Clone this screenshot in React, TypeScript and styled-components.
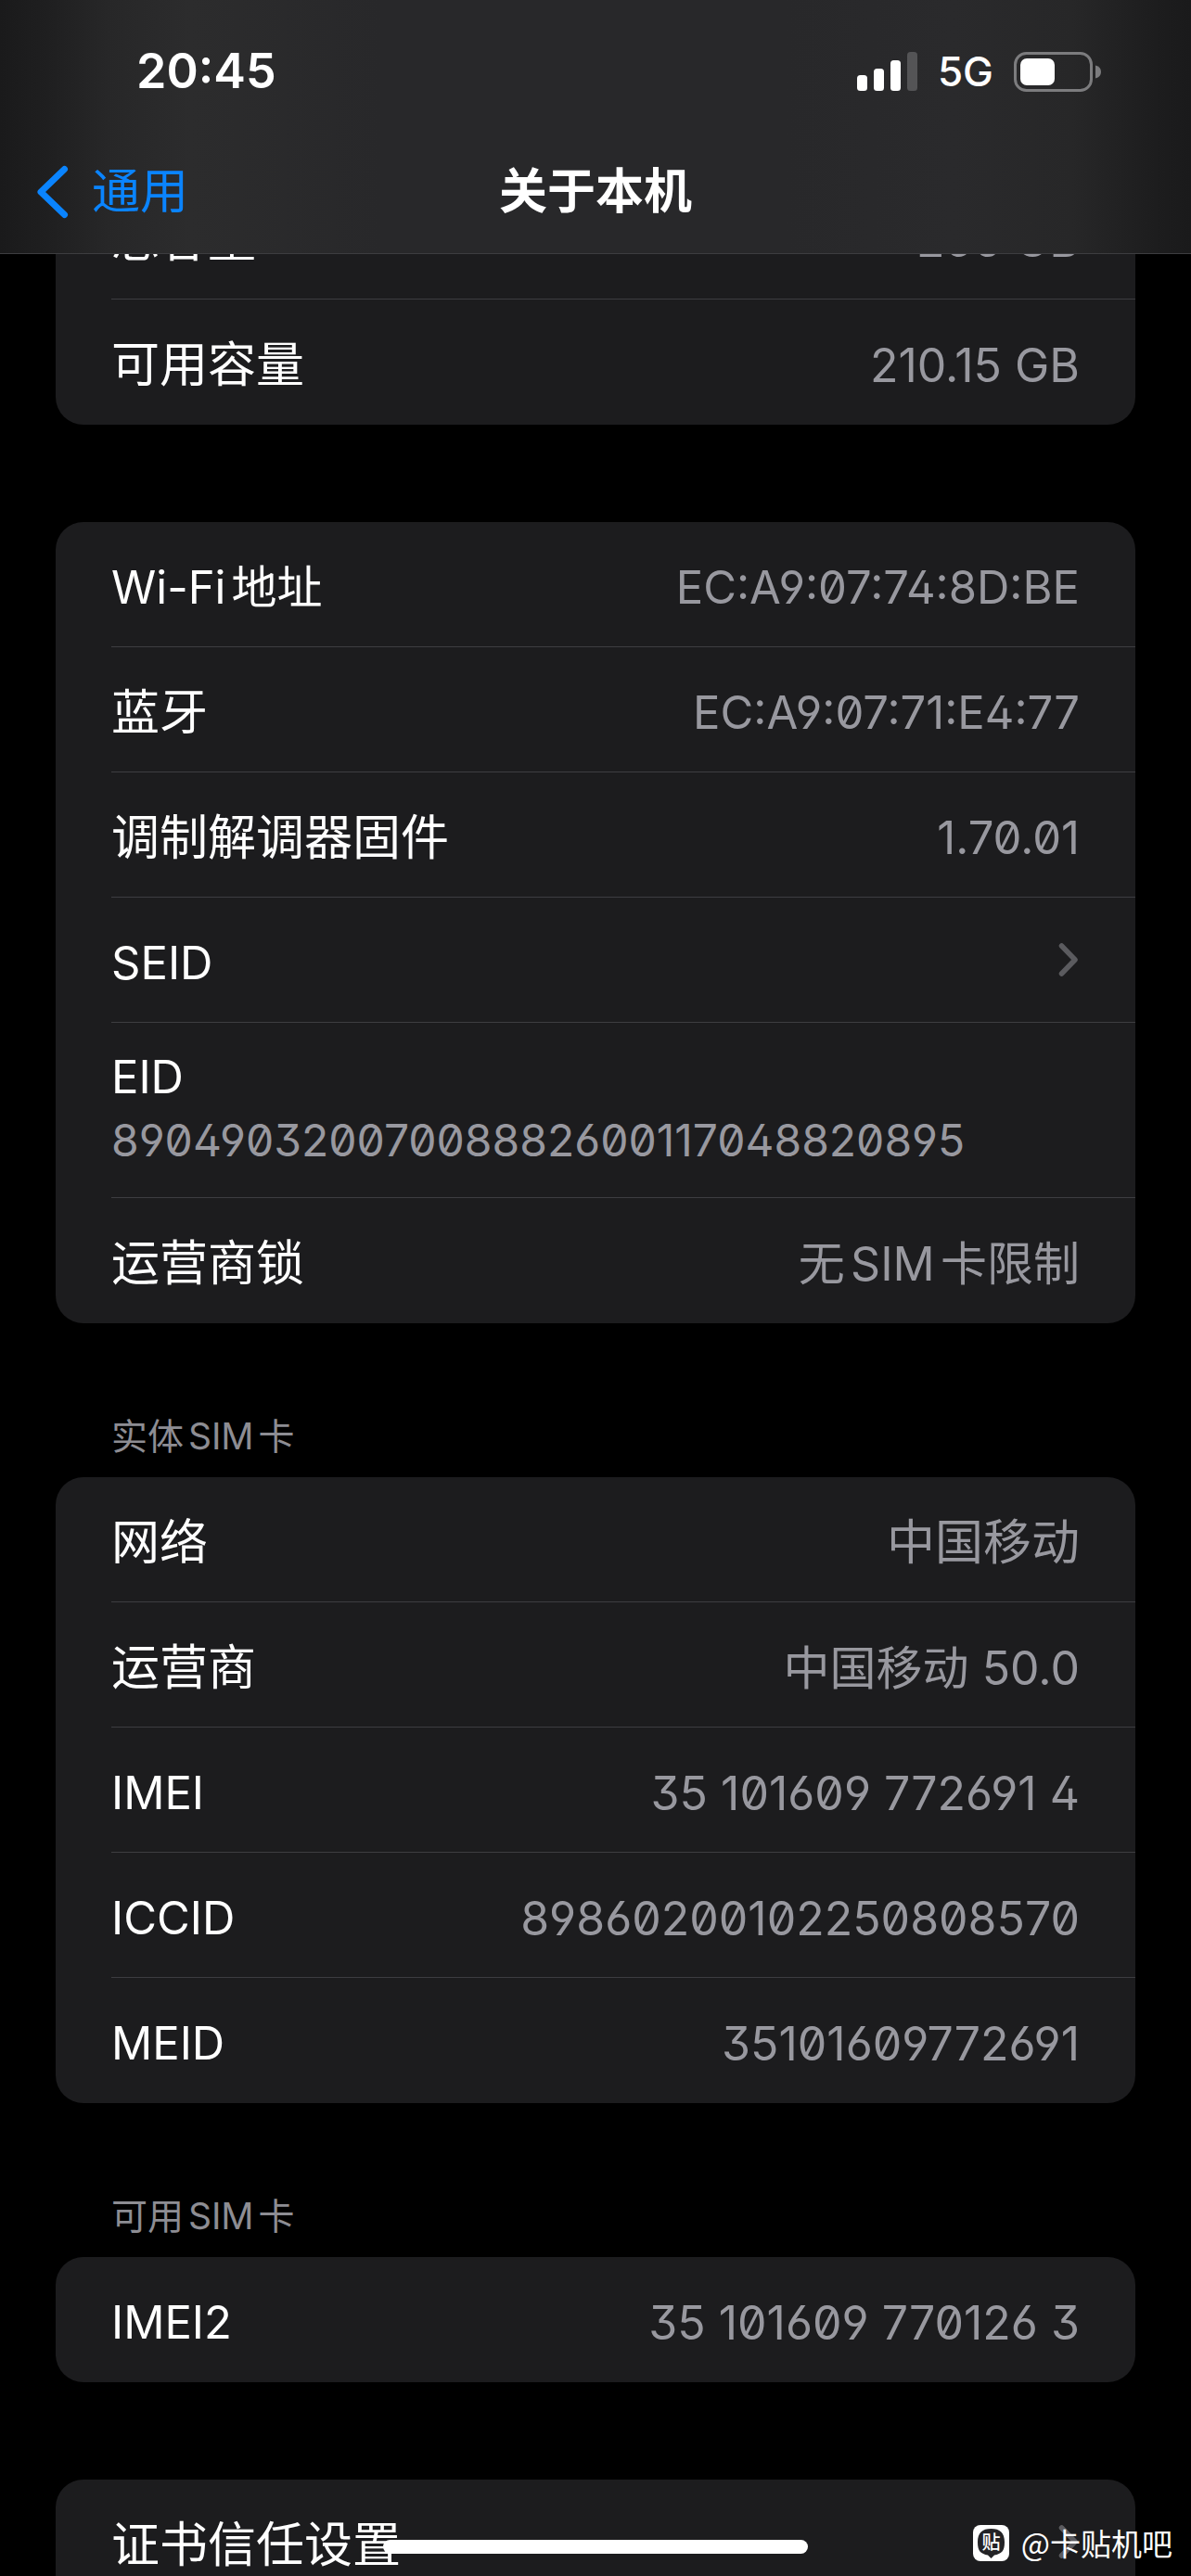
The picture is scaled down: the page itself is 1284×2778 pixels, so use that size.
import React from 'react';
import styled, { createGlobalStyle, css } from 'styled-components';

const fontStack = `Inter, "Noto Sans CJK SC", sans-serif`;

const GlobalStyle = createGlobalStyle`
  *, *::before, *::after { box-sizing: border-box; }
  html, body { margin: 0; background: #000; }
  body {
    font-family: ${fontStack};
    color: #fff;
    text-autospace: normal;
  }
`;

const Screen = styled.div`
  position: relative;
  height: 100vh;
  overflow: hidden;
  background: #000;
`;

const Header = styled.header`
  position: absolute;
  inset: 0 0 auto;
  z-index: 1;
  border-bottom: 1px solid #3d3d40;
  background: linear-gradient(
    90deg,
    #1a1a1b 0%,
    #1f1f20 4%,
    #272728 9%,
    #2c2c2d 16%,
    #28282a 32%,
    #28282a 66%,
    #2a2a2c 80%,
    #272728 90%,
    #1d1d1e 97%,
    #1a1a1b 100%
  );
`;

const StatusBar = styled.div`
  display: flex;
  align-items: center;
  justify-content: space-between;
  height: 141px;
  padding: 13px 96px 0 147px;
`;

const Time = styled.time`
  font-size: 52px;
  font-weight: 600;
  line-height: 60px;
`;

const StatusIcons = styled.div`
  display: flex;
  align-items: center;
  gap: 22px;
`;

const Network = styled.span`
  font-size: 44px;
  font-weight: 500;
  line-height: 48px;
`;

const NavBar = styled.nav`
  display: grid;
  grid-template-columns: 1fr auto 1fr;
  align-items: center;
  height: 132px;
  padding: 0 38px;
`;

const BackButton = styled.button`
  display: flex;
  align-items: center;
  justify-self: start;
  gap: 24px;
  padding: 0;
  border: 0;
  background: none;
  color: #0a84ff;
  font: 400 52px/60px ${fontStack};
`;

const Title = styled.h1`
  margin: 0;
  font-size: 52px;
  font-weight: 600;
  line-height: 60px;
`;

const Content = styled.main`
  height: 100%;
  overflow-y: auto;
  scrollbar-width: none;
  padding: 188px 60px 60px;
`;

const Section = styled.section`
  & + & { margin-top: 105px; }
`;

const SectionTitle = styled.h2`
  margin: 0;
  padding: 0 60px 21px;
  font-size: 39px;
  font-weight: 400;
  line-height: 40px;
  color: #8d8d93;

  /* the heading sits a little closer to the previous card */
  margin-top: -3px;
  padding-bottom: 24px;
`;

const Card = styled.ul`
  margin: 0;
  padding: 0 0 0 60px;
  list-style: none;
  border-radius: 30px;
  background: #1c1c1e;
`;

const Item = styled.li`
  &:not(:last-child) { border-bottom: 1px solid #3d3d41; }
  &:last-child { padding-bottom: 1px; }
`;

const rowBox = css`
  display: flex;
  align-items: center;
  justify-content: space-between;
  width: 100%;
  height: 134px;
  padding: 0 60px 0 0;
`;

const Row = styled.div`
  ${rowBox}
`;

const StackedRow = styled.div`
  display: flex;
  flex-direction: column;
  justify-content: center;
  height: 188px;
  padding: 0 60px 10px 0;
`;

const RowButton = styled.button`
  ${rowBox}
  border: 0;
  background: none;
  color: inherit;
  font-family: inherit;
  text-align: left;
`;

type Script = 'han' | 'latin' | 'number' | 'long';

const textSize: Record<Script, string> = {
  han: '52px',
  number: '50px',
  latin: '49px',
  long: '48px',
};

const Label = styled.span<{ $script: Script }>`
  padding-top: 8px;
  font-size: ${({ $script }) => textSize[$script]};
  line-height: 60px;
`;

const Value = styled(Label)<{ $code?: boolean }>`
  color: #98989f;
  font-feature-settings: ${({ $code }) => ($code ? `'zero' 1, 'ss01' 1` : 'normal')};
`;

const HomeIndicator = styled.div`
  position: absolute;
  left: 50%;
  bottom: 24px;
  width: 458px;
  height: 15px;
  margin-left: -229px;
  border-radius: 8px;
  background: #fff;
`;

const Watermark = styled.div`
  position: absolute;
  right: 20px;
  bottom: 12px;
  display: flex;
  align-items: center;
  gap: 13px;
  font: 400 33px/48px "Noto Sans CJK SC", sans-serif;
`;

const SignalIcon = () => (
  <svg width="65" height="42" viewBox="0 0 65 42" fill="#fff" aria-hidden="true">
    <rect x="0" y="25" width="11" height="17" rx="3.5" />
    <rect x="18" y="18" width="11" height="24" rx="3.5" />
    <rect x="36" y="9" width="11" height="33" rx="3.5" />
    <rect x="54" y="0" width="11" height="42" rx="3.5" fill="#545456" />
  </svg>
);

const BatteryIcon = () => (
  <svg width="95" height="43" viewBox="0 0 95 43" aria-hidden="true">
    <rect x="1.5" y="1.5" width="82" height="40" rx="12" fill="none" stroke="#7c7c7e" strokeWidth="3" />
    <rect x="7" y="7" width="37" height="29" rx="7" fill="#fff" />
    <path d="M88 14.5c4 1 6 3.500 6 7s-2 6-6 7z" fill="#7c7c7e" />
  </svg>
);

const BackIcon = () => (
  <svg width="37" height="60" viewBox="0 0 37 60" fill="none" aria-hidden="true">
    <path d="M31.500 5.500 6 30l25.500 24.500" stroke="#0a84ff" strokeWidth="7" strokeLinecap="round" strokeLinejoin="round" />
  </svg>
);

const ForwardIcon = () => (
  <svg width="23" height="38" viewBox="0 0 23 38" fill="none" aria-hidden="true">
    <path d="M3.500 4 18 19 3.500 34" stroke="#5b5b5f" strokeWidth="5.500" strokeLinecap="round" strokeLinejoin="round" />
  </svg>
);

const TiebaIcon = () => (
  <svg width="39" height="39" viewBox="0 0 39 39" aria-hidden="true">
    <rect width="39" height="39" rx="8" fill="#fff" />
    <path
      d="M19.500 4C29 4 34 8.500 34 18.500S30.500 31 23 32.500L19.500 36l-3.500-3.500C8.500 31 5 28.500 5 18.500S10 4 19.500 4z"
      fill="#232326"
    />
    <text
      x="19.500"
      y="26"
      textAnchor="middle"
      fontFamily="'Noto Sans CJK SC', sans-serif"
      fontSize="20"
      fontWeight="500"
      fill="#fff"
    >
      贴
    </text>
  </svg>
);

type Entry = {
  label: string;
  labelScript?: Script;
  value?: string;
  valueScript?: Script;
  code?: boolean;
  stacked?: boolean;
  link?: boolean;
};

type Group = { title?: string; entries: Entry[] };

const groups: Group[] = [
  {
    entries: [
      { label: '总容量', value: '256 GB' },
      { label: '可用容量', value: '210.15 GB' },
    ],
  },
  {
    entries: [
      { label: 'Wi-Fi地址', labelScript: 'latin', value: 'EC:A9:07:74:8D:BE', valueScript: 'latin', code: true },
      { label: '蓝牙', value: 'EC:A9:07:71:E4:77', valueScript: 'latin', code: true },
      { label: '调制解调器固件', value: '1.70.01', valueScript: 'latin', code: true },
      { label: 'SEID', labelScript: 'latin', link: true },
      {
        label: 'EID',
        labelScript: 'latin',
        value: '89049032007008882600117048820895',
        valueScript: 'long',
        code: true,
        stacked: true,
      },
      { label: '运营商锁', value: '无SIM卡限制' },
    ],
  },
  {
    title: '实体SIM卡',
    entries: [
      { label: '网络', value: '中国移动', valueScript: 'han' },
      { label: '运营商', value: '中国移动 50.0' },
      { label: 'IMEI', labelScript: 'latin', value: '35 101609 772691 4', code: true },
      { label: 'ICCID', labelScript: 'latin', value: '89860200102250808570', code: true },
      { label: 'MEID', labelScript: 'latin', value: '35101609772691', code: true },
    ],
  },
  {
    title: '可用SIM卡',
    entries: [{ label: 'IMEI2', labelScript: 'latin', value: '35 101609 770126 3', code: true }],
  },
  { entries: [{ label: '证书信任设置', link: true }] },
];

const InfoItem = ({
  label,
  labelScript = 'han',
  value,
  valueScript = 'number',
  code,
  stacked,
  link,
}: Entry) => {
  if (link) {
    return (
      <Item>
        <RowButton type="button">
          <Label $script={labelScript}>{label}</Label>
          <ForwardIcon />
        </RowButton>
      </Item>
    );
  }
  const Box = stacked ? StackedRow : Row;
  return (
    <Item>
      <Box>
        <Label $script={labelScript}>{label}</Label>
        <Value $script={valueScript} $code={code}>
          {value}
        </Value>
      </Box>
    </Item>
  );
};

export default function App() {
  return (
    <>
      <GlobalStyle />
      <Screen>
        <Header>
          <StatusBar>
            <Time>20:45</Time>
            <StatusIcons>
              <SignalIcon />
              <Network>5G</Network>
              <BatteryIcon />
            </StatusIcons>
          </StatusBar>
          <NavBar>
            <BackButton type="button">
              <BackIcon />
              通用
            </BackButton>
            <Title>关于本机</Title>
          </NavBar>
        </Header>
        <Content>
          {groups.map((group, index) => (
            <Section key={index}>
              {group.title && <SectionTitle>{group.title}</SectionTitle>}
              <Card>
                {group.entries.map((entry) => (
                  <InfoItem key={entry.label} {...entry} />
                ))}
              </Card>
            </Section>
          ))}
        </Content>
        <HomeIndicator />
        <Watermark>
          <TiebaIcon />
          @卡贴机吧
        </Watermark>
      </Screen>
    </>
  );
}
